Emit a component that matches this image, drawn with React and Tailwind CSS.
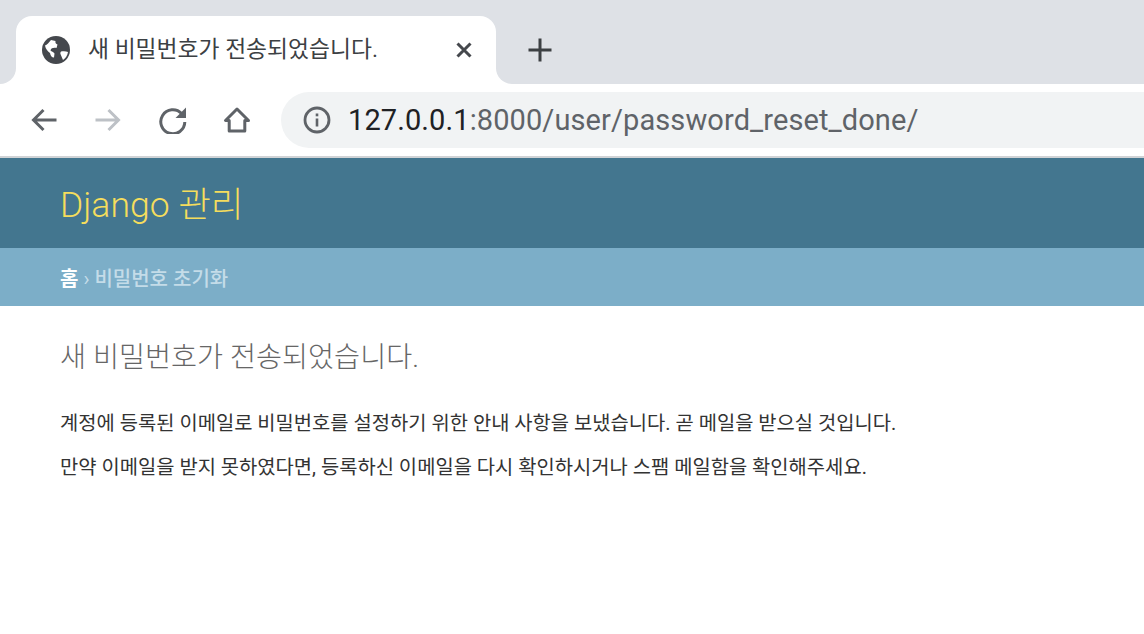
const KR = "font-['Roboto','Noto_Sans_CJK_KR',sans-serif]";

function Globe() {
  return (
    <svg width="28" height="28" viewBox="0 0 28 28" className="shrink-0">
      <circle cx="14" cy="14" r="14" fill="#45484d" />
      <path
        d="M3 9.500c2-.5 4-3 6-5.500l4.500 1c-.5 2 .5 3 2 3.500l-1 3.500c-3-.5-5.500 0-6 2.500 1 1.500 3 1 4 3l-.5 4c-2.500 0-3.500-2-4-4.500C6 15.500 3.500 13 3 9.500z"
        fill="#fff"
      />
      <path
        d="M19 15.500c2-.5 5-.5 7 .5-.5 3.500-2.500 6.500-5 8l-1.500-3.500c-.5-2-2-3-.5-5z"
        fill="#fff"
      />
    </svg>
  );
}

function Arrow({ color, flip }) {
  return (
    <svg width="28" height="28" viewBox="0 0 28 28" className={flip ? "-scale-x-100" : ""}>
      <path
        d="M26.500 14H3.500M13.500 4 3.500 14l10 10"
        fill="none"
        stroke={color}
        strokeWidth="3"
      />
    </svg>
  );
}

function Reload() {
  return (
    <svg width="28" height="28" viewBox="0 0 28 28">
      <path
        d="M22.600 7.600A12 12 0 1 0 25.800 16"
        fill="none"
        stroke="#5f6368"
        strokeWidth="3"
      />
      <path d="M27 1.500V12H16.500z" fill="#5f6368" />
    </svg>
  );
}

function Home() {
  return (
    <svg width="28" height="28" viewBox="0 0 28 28">
      <path
        d="M14 3 2.500 14.500h3.700v10.500h15.600V14.500h3.700z"
        fill="none"
        stroke="#5f6368"
        strokeWidth="3"
        strokeLinejoin="round"
      />
    </svg>
  );
}

function Info() {
  return (
    <svg width="28" height="28" viewBox="0 0 28 28">
      <circle cx="14" cy="14" r="12" fill="none" stroke="#5f6368" strokeWidth="2.800" />
      <rect x="12.700" y="12.500" width="2.600" height="8" fill="#5f6368" />
      <rect x="12.700" y="7.500" width="2.600" height="2.800" fill="#5f6368" />
    </svg>
  );
}

function TabStrip() {
  return (
    <div className="flex h-[84px] bg-white">
      <div className="w-4 rounded-br-[16px] bg-[#dee1e6]" />
      <div className="w-[480px] bg-[#dee1e6] pt-4">
        <div className="flex h-[68px] items-center rounded-t-[16px] bg-white pl-[26px] pr-[23px]">
          <Globe />
          <span className="ml-[18px] flex-1 text-[22.8px] text-[#3c4043]">새 비밀번호가 전송되었습니다.</span>
          <svg width="18" height="18" viewBox="0 0 18 18">
            <path d="M2.500 2.500l13 13M15.500 2.500l-13 13" stroke="#45484d" strokeWidth="3" />
          </svg>
        </div>
      </div>
      <div className="flex flex-1 items-center rounded-bl-[16px] bg-[#dee1e6] pl-[31px] pt-[16px]">
        <svg width="26" height="26" viewBox="0 0 26 26">
          <path d="M13 1.500v23M1.500 13h23" stroke="#3c4043" strokeWidth="3" />
        </svg>
      </div>
    </div>
  );
}

function Toolbar() {
  return (
    <div className="flex h-[72px] items-center bg-white pl-[30px]">
      <Arrow color="#5f6368" />
      <div className="ml-[36px]">
        <Arrow color="#bdc1c6" flip />
      </div>
      <div className="ml-[37px]">
        <Reload />
      </div>
      <div className="ml-[36px]">
        <Home />
      </div>
      <div className="ml-[30px] flex h-14 flex-1 items-center rounded-l-[28px] bg-[#f1f3f4] pl-[22px]">
        <Info />
        <span className="ml-[17px] pt-0.5 text-[29px] tracking-[0.1px] text-[#5f6368]">
          <span className="text-[#202124]">127.0.0.1</span>:8000/user/password_reset_done/
        </span>
      </div>
    </div>
  );
}

export default function App() {
  return (
    <div className={`min-h-[634px] bg-white ${KR}`}>
      <TabStrip />
      <Toolbar />
      <div className="h-0.5 bg-[#d0d3d6]" />
      <header className="flex h-[90px] items-center bg-[#43768f] px-[60px] pt-[6px]">
        <h1 className="text-[35.5px] font-light text-[#f5dd5d]">Django 관리</h1>
      </header>
      <nav className="flex h-[58px] items-center bg-[#7caec8] px-[60px] pt-[4px] text-[20px] text-[#c4dce8]">
        <a className="font-bold text-white">홈</a>
        <span className="mx-[5px]">›</span>
        <span className="font-medium">비밀번호 초기화</span>
      </nav>
      <main className="px-[60px] pt-[33px]">
        <h2 className="text-[28.3px] font-light leading-[38px] text-[#666]">새 비밀번호가 전송되었습니다.</h2>
        <p className="mt-[34px] text-[19.85px] leading-[26px] text-[#333]">
          계정에 등록된 이메일로 비밀번호를 설정하기 위한 안내 사항을 보냈습니다. 곧 메일을 받으실 것입니다.
        </p>
        <p className="mt-[18px] text-[19.85px] leading-[26px] text-[#333]">
          만약 이메일을 받지 못하였다면, 등록하신 이메일을 다시 확인하시거나 스팸 메일함을 확인해주세요.
        </p>
      </main>
    </div>
  );
}
